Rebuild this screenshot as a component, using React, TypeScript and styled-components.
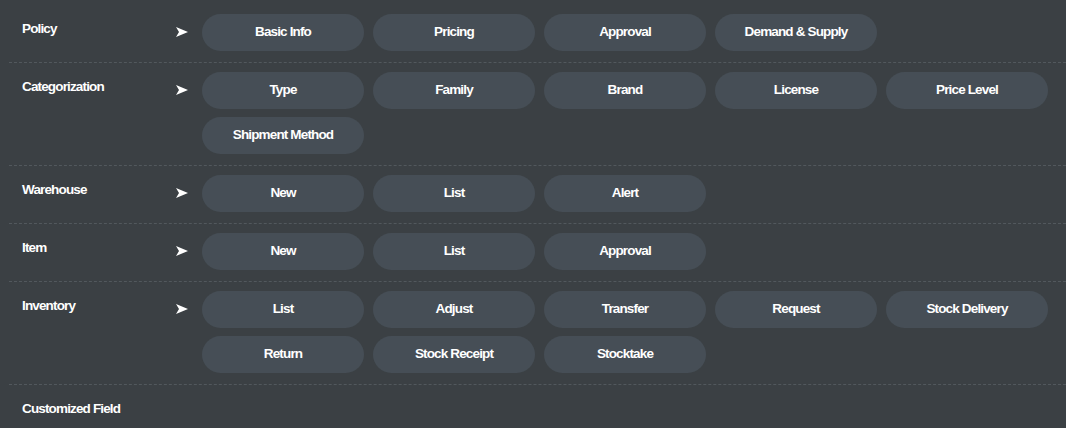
import React from 'react'
import styled, { createGlobalStyle } from 'styled-components'

const GlobalStyle = createGlobalStyle`
  html, body {
    margin: 0;
    padding: 0;
    background: #3b4044;
  }
  body {
    font-family: 'Liberation Sans', Arial, sans-serif;
    color: #fff;
    overflow: hidden;
  }
`

const Page = styled.div`
  padding: 5px 0 0 9px;
  min-height: 428px;
  box-sizing: border-box;
`

const Row = styled.section<{ $last?: boolean }>`
  display: flex;
  align-items: flex-start;
  padding: 9px 0 ${(p) => (p.$last ? '0' : '11px')};
  border-bottom: ${(p) => (p.$last ? 'none' : '1px dashed #52585d')};
`

const Label = styled.div`
  width: 167px;
  padding: 7px 0 0 13px;
  box-sizing: border-box;
  height: 37px;
  line-height: 16px;
  font-size: 13.5px;
  font-weight: bold;
  letter-spacing: -0.85px;
  flex-shrink: 0;
`

const Arrow = styled.div`
  width: 26px;
  height: 36px;
  display: flex;
  align-items: center;
  flex-shrink: 0;
`

const Grid = styled.div`
  display: grid;
  grid-template-columns: repeat(5, 162px);
  column-gap: 9px;
  row-gap: 8px;
`

const Pill = styled.button`
  height: 37px;
  border: none;
  border-radius: 18.5px;
  background: #464e56;
  color: #fff;
  font-family: 'Liberation Sans', Arial, sans-serif;
  font-size: 13.5px;
  font-weight: bold;
  letter-spacing: -0.85px;
  padding: 0 0 2px;
  cursor: pointer;
`

const sections: { name: string; items: string[] }[] = [
  { name: 'Policy', items: ['Basic Info', 'Pricing', 'Approval', 'Demand & Supply'] },
  {
    name: 'Categorization',
    items: ['Type', 'Family', 'Brand', 'License', 'Price Level', 'Shipment Method'],
  },
  { name: 'Warehouse', items: ['New', 'List', 'Alert'] },
  { name: 'Item', items: ['New', 'List', 'Approval'] },
  {
    name: 'Inventory',
    items: ['List', 'Adjust', 'Transfer', 'Request', 'Stock Delivery', 'Return', 'Stock Receipt', 'Stocktake'],
  },
  { name: 'Customized Field', items: [] },
]

function ArrowIcon() {
  return (
    <svg width="12" height="10" viewBox="0 0 12 10">
      <polygon points="0,0 12,5 0,10 3,5" fill="#fff" />
    </svg>
  )
}

export default function App() {
  return (
    <>
      <GlobalStyle />
      <Page>
        {sections.map((s, i) => (
          <Row key={s.name} $last={i === sections.length - 1}>
            <Label>{s.name}</Label>
            {s.items.length > 0 && (
              <>
                <Arrow>
                  <ArrowIcon />
                </Arrow>
                <Grid>
                  {s.items.map((item) => (
                    <Pill key={item}>{item}</Pill>
                  ))}
                </Grid>
              </>
            )}
          </Row>
        ))}
      </Page>
    </>
  )
}
